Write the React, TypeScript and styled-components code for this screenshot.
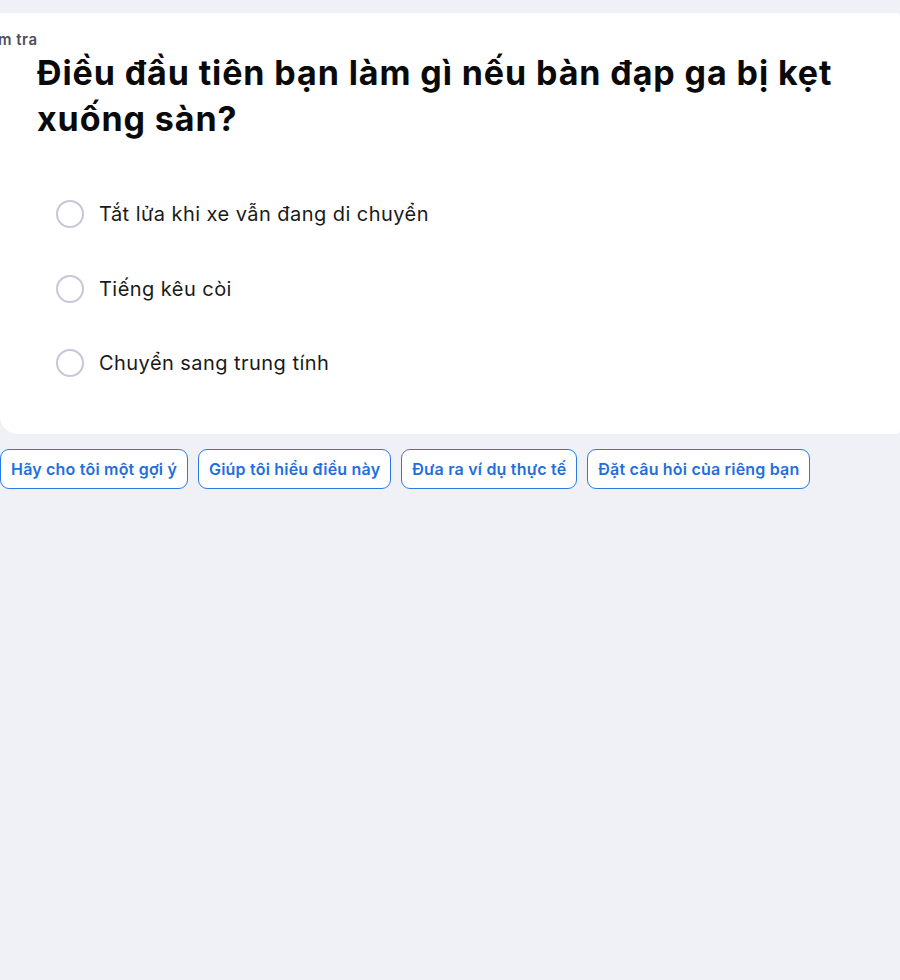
import React from "react";
import styled, { createGlobalStyle } from "styled-components";

const Global = createGlobalStyle`
  html, body { margin: 0; padding: 0; background: #f0f1f6; overflow: hidden; }
  body { font-family: "Inter", "Noto Sans", sans-serif; }
`;

const Page = styled.div`
  padding-top: 13px;
  width: 900px;
  height: 980px;
  box-sizing: border-box;
`;

const Card = styled.section`
  background: #ffffff;
  border-radius: 0 4px 4px 18px;
  padding: 18px 0 57px 0;
`;

const Label = styled.div`
  margin-left: -27px;
  font-size: 15px;
  font-weight: 600;
  letter-spacing: 0.5px;
  color: #514e5a;
  line-height: 18px;
`;

const Title = styled.h1`
  margin: 1px 40px 0 37px;
  font-size: 34px;
  line-height: 46px;
  font-weight: 700;
  letter-spacing: 0.9px;
  color: #0a0a0a;
`;

const Options = styled.div`
  display: flex;
  flex-direction: column;
  margin-top: 58px;
  padding-left: 56px;
  gap: 46.5px;
`;

const Option = styled.label`
  display: flex;
  align-items: center;
  gap: 15px;
  height: 28px;
  font-size: 20px;
  letter-spacing: 0.45px;
  color: #1a1a1a;
  cursor: pointer;
`;

const Radio = styled.span`
  width: 28px;
  height: 28px;
  box-sizing: border-box;
  border: 2px solid #c8c6d8;
  border-radius: 50%;
  flex: none;
`;

const Chips = styled.div`
  display: flex;
  gap: 10px;
  margin-top: 15px;
`;

const Chip = styled.button`
  height: 40px;
  padding: 0 10px;
  background: #ffffff;
  border: 1px solid #2a7be4;
  border-radius: 9px;
  font-family: inherit;
  font-size: 16px;
  font-weight: 600;
  letter-spacing: 0.2px;
  color: #1f6fdf;
  cursor: pointer;
`;

const options = [
  "Tắt lửa khi xe vẫn đang di chuyển",
  "Tiếng kêu còi",
  "Chuyển sang trung tính",
];

const chips = [
  "Hãy cho tôi một gợi ý",
  "Giúp tôi hiểu điều này",
  "Đưa ra ví dụ thực tế",
  "Đặt câu hỏi của riêng bạn",
];

export default function App() {
  return (
    <Page>
      <Global />
      <Card>
        <Label>Kiểm tra</Label>
        <Title>Điều đầu tiên bạn làm gì nếu bàn đạp ga bị kẹt xuống sàn?</Title>
        <Options>
          {options.map((o) => (
            <Option key={o}>
              <Radio />
              {o}
            </Option>
          ))}
        </Options>
      </Card>
      <Chips>
        {chips.map((c) => (
          <Chip key={c}>{c}</Chip>
        ))}
      </Chips>
    </Page>
  );
}
